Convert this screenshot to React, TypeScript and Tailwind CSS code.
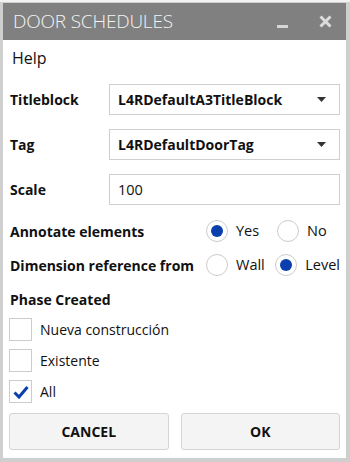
import React from "react";

const font = { fontFamily: '"Open Sans", "Noto Sans", sans-serif' };

function Caret() {
  return (
    <svg width="9" height="5" viewBox="0 0 9 5" className="shrink-0">
      <path d="M0 0 H9 L4.5 5 Z" fill="#333" />
    </svg>
  );
}

function Radio({ checked }: { checked: boolean }) {
  return (
    <div className="w-[22px] h-[22px] rounded-full border border-[#cccccc] bg-white flex items-center justify-center shrink-0">
      {checked && <div className="w-[12px] h-[12px] rounded-full bg-[#0b3fad]" />}
    </div>
  );
}

function Check({ checked }: { checked: boolean }) {
  return (
    <div className="w-[23px] h-[23px] border border-[#cccccc] bg-white flex items-center justify-center shrink-0">
      {checked && (
        <svg width="16" height="14" viewBox="0 0 16 14">
          <path d="M1.5 7.5 L6 12 L14.5 2" fill="none" stroke="#0b3fad" strokeWidth="3" />
        </svg>
      )}
    </div>
  );
}

export default function App() {
  return (
    <div
      className="w-[350px] h-[462px] bg-white flex flex-col text-[#111]"
      style={font}
    >
      <div className="h-[3px] bg-[#f2f2f2] border-b border-[#d0d0d0]" />
      <div className="flex-1 flex flex-col border-l-[3px] border-r-[4px] border-b-[4px] border-[#cfcfcf]">
        <div className="h-[37px] bg-[#808080] flex items-center pl-[10px] pr-[14px]">
          <span className="text-[19px] text-[#f4f4f4] font-light tracking-[-0.2px] flex-1">
            DOOR SCHEDULES
          </span>
          <div className="w-[11px] h-[3px] bg-[#d6d6d6] mt-[9px] mr-[31px]" />
          <svg width="13" height="13" viewBox="0 0 13 13">
            <path d="M1.5 1.5 L11.5 11.5 M11.5 1.5 L1.5 11.5" stroke="#dcdcdc" strokeWidth="3" />
          </svg>
        </div>
        <div className="flex flex-col px-[6px]">
          <div className="h-[36px] flex items-center pl-[3px] text-[16px]">Help</div>
          <div className="mt-[8px] flex items-center h-[31px]">
            <span className="w-[100px] text-[14px] font-bold pl-[1px]">Titleblock</span>
            <div className="flex-1 h-[31px] border border-[#cfcfcf] flex items-center pl-[8px] pr-[13px]">
              <span className="flex-1 text-[14px] font-bold">L4RDefaultA3TitleBlock</span>
              <Caret />
            </div>
          </div>
          <div className="mt-[14px] flex items-center h-[31px]">
            <span className="w-[100px] text-[14px] font-bold pl-[1px]">Tag</span>
            <div className="flex-1 h-[31px] border border-[#cfcfcf] flex items-center pl-[8px] pr-[13px]">
              <span className="flex-1 text-[14px] font-bold">L4RDefaultDoorTag</span>
              <Caret />
            </div>
          </div>
          <div className="mt-[14px] flex items-center h-[31px]">
            <span className="w-[100px] text-[14px] font-bold pl-[1px]">Scale</span>
            <div className="flex-1 h-[31px] border border-[#cfcfcf] flex items-center pl-[8px]">
              <span className="text-[14.5px]">100</span>
            </div>
          </div>
          <div className="mt-[15px] flex items-center h-[22px]">
            <span className="w-[197px] shrink-0 text-[14px] font-bold pl-[1px]">Annotate elements</span>
            <Radio checked />
            <span className="ml-[8px] w-[41px] text-[14.5px]">Yes</span>
            <Radio checked={false} />
            <span className="ml-[8px] text-[14.5px]">No</span>
          </div>
          <div className="mt-[12px] flex items-center h-[22px]">
            <span className="w-[197px] shrink-0 text-[14px] font-bold pl-[1px] whitespace-nowrap">Dimension reference from</span>
            <Radio checked={false} />
            <span className="ml-[8px] w-[41px] text-[14.5px]">Wall</span>
            <Radio checked />
            <span className="ml-[8px] text-[14.5px]">Level</span>
          </div>
          <div className="mt-[12px] h-[22px] flex items-center text-[14px] font-bold pl-[1px]">
            Phase Created
          </div>
          <div className="mt-[8px] flex flex-col gap-[8px]">
            <div className="flex items-center">
              <Check checked={false} />
              <span className="ml-[8px] text-[14px]">Nueva construcción</span>
            </div>
            <div className="flex items-center">
              <Check checked={false} />
              <span className="ml-[8px] text-[14px]">Existente</span>
            </div>
            <div className="flex items-center">
              <Check checked />
              <span className="ml-[8px] text-[14px]">All</span>
            </div>
          </div>
          <div className="mt-[10px] flex gap-[12px]">
            <div className="w-[160px] h-[37px] rounded-[3px] border border-[#d4d4d4] bg-[#f4f4f4] flex items-center justify-center text-[14px] font-bold">
              CANCEL
            </div>
            <div className="w-[160px] h-[37px] rounded-[3px] border border-[#d4d4d4] bg-[#f4f4f4] flex items-center justify-center text-[14px] font-bold">
              OK
            </div>
          </div>
        </div>
      </div>
    </div>
  );
}
